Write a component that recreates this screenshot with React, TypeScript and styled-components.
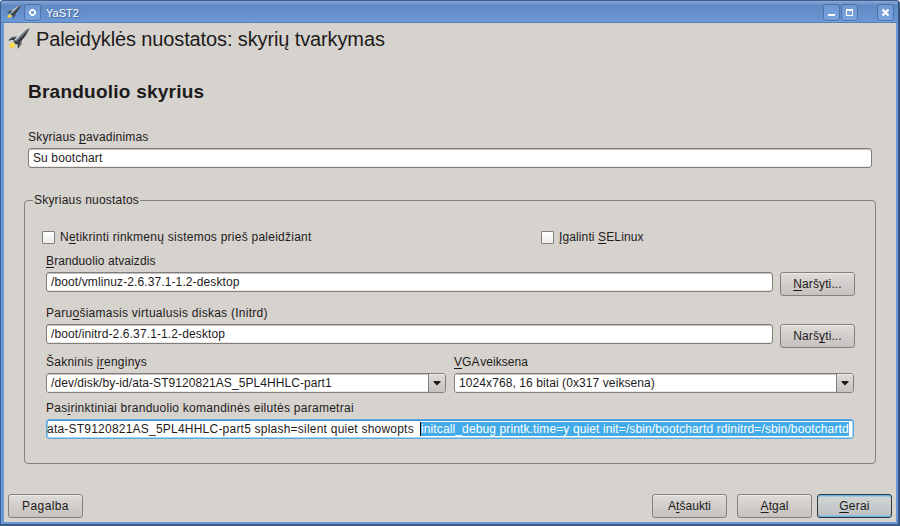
import React from "react";
import styled, { createGlobalStyle } from "styled-components";

const GlobalStyle = createGlobalStyle`
  * { box-sizing: border-box; }
  body { margin: 0; background: #ffffff; }
`;

const Window = styled.div`
  width: 900px;
  height: 526px;
  display: flex;
  flex-direction: column;
  overflow: hidden;
  border-radius: 3px 4px 0 0;
  border-style: solid;
  border-color: #3f5c8a #38557f #3b5a87 #3f5f93;
  border-width: 1px 2px 2px 1px;
  background: #6b98d6;
  color: #1d1b1a;
  font: 12px/14px "Liberation Sans", sans-serif;
`;

const TitleBar = styled.header`
  height: 22px;
  flex: none;
  display: flex;
  align-items: flex-start;
  padding: 3px 4px 0 5px;
  border-bottom: 1px solid #5580bd;
  background: linear-gradient(#86abe0 0, #7298cf 2px, #5f88c1 5px, #6b99d6 21px);
`;

const TitleText = styled.span`
  flex: 1;
  margin: 3px 0 0 5px;
  color: #ffffff;
  font-size: 11px;
  line-height: 13px;
  text-shadow: 1px 1px 1px rgba(30, 55, 100, 0.6);
`;

const TitleButton = styled.button<{ $gap?: number }>`
  width: 17px;
  height: 17px;
  flex: none;
  margin: 0 0 0 ${(p) => p.$gap ?? 0}px;
  padding: 0;
  border: 1px solid #4c70a8;
  border-radius: 3px;
  background: linear-gradient(#6f97d0, #7aa4df);
  box-shadow: 0 1px 0 rgba(160, 190, 235, 0.35);
  svg { display: block; }
`;

const Body = styled.main`
  height: 499px;
  flex: none;
  margin: 0 2px 0 3px;
  background: #d6d2ce;
  display: flex;
  flex-direction: column;
`;

const Heading = styled.div`
  display: flex;
  height: 24px;
  margin: 4px 0 0 3px;
  font-size: 20px;
  line-height: 24px;
  svg { margin: 0 5px 0 0; }
`;

const Section = styled.h1`
  margin: 30px 0 27px 24px;
  font-size: 19px;
  line-height: 22px;
  letter-spacing: 0.24px;
`;

const Text = styled.span<{ $spacing?: number; $word?: number }>`
  letter-spacing: ${(p) => p.$spacing ?? 0}px;
  word-spacing: ${(p) => p.$word ?? 0}px;
  white-space: pre;
  u {
    text-decoration: underline 1px;
    text-underline-offset: 2px;
    text-decoration-skip-ink: none;
  }
`;

const Label = styled.label<{ $top?: number }>`
  display: block;
  height: 14px;
  margin: ${(p) => p.$top ?? 0}px 0 4px;
`;

const NameField = styled.div`
  margin: 0 24px;
`;

const Field = styled.div<{ $focused?: boolean }>`
  flex: 1;
  height: 20px;
  display: flex;
  padding: 2px 0 0 4px;
  overflow: hidden;
  border: 1px solid #817d7a;
  border-radius: 3px;
  background: #ffffff;
  box-shadow: inset 0 1px 0 #c4c1bf, inset 0 -1px 0 #ebe9e8;
  ${(p) =>
    p.$focused &&
    `
    padding-left: 0;
    border-color: #5aa9dc;
    box-shadow: inset 0 1px 0 #3f95d0, inset 1px 0 0 #8cc6ea, inset 0 -1px 0 #a9d7f2, inset -1px 0 0 #a9d7f2;
  `}
`;

const Caret = styled.i`
  width: 1px;
  height: 14px;
  background: #000000;
  flex: none;
`;

const Selection = styled.span`
  width: 428px;
  height: 14px;
  flex: none;
  color: #ffffff;
  background: #43ace8;
`;

const BeforeSelection = styled.span`
  width: 373px;
  flex: none;
`;

const Group = styled.section`
  position: relative;
  height: 264px;
  margin: 32px 20px 0;
  padding: 29px 21px 0;
  border: 1px solid #84807d;
  border-radius: 4px;
`;

const Legend = styled.span`
  position: absolute;
  top: -8px;
  left: 8px;
  width: 107px;
  padding-left: 1px;
  background: #d6d2ce;
`;

const CheckRow = styled.div`
  display: grid;
  grid-template-columns: 499px 1fr;
  height: 14px;
  margin-left: -4px;
`;

const Check = styled.div`
  display: flex;
  gap: 5px;
`;

const CheckBox = styled.i`
  width: 13px;
  height: 13px;
  margin-top: 1px;
  flex: none;
  border: 1px solid #84807d;
  border-radius: 1px;
  background: linear-gradient(#ffffff, #eeecea);
`;

const Row = styled.div`
  display: flex;
  gap: 7px;
  height: 24px;
  margin-right: -1px;
`;

const Button = styled.button<{ $primary?: boolean }>`
  width: 75px;
  height: 24px;
  flex: none;
  padding: 4px 0 0;
  display: flex;
  justify-content: center;
  border: 1px solid #84807d;
  border-radius: 3px;
  background: linear-gradient(#dedbd9, #c5c1be);
  box-shadow: inset 0 1px 0 #efedec;
  color: #1d1b1a;
  font: 12px/14px "Liberation Sans", sans-serif;
  ${(p) =>
    p.$primary &&
    `
    border-color: #33373a;
    background: linear-gradient(#d3d5d6, #bcc0c2);
    box-shadow: inset 0 1px 0 #5fb5e6, inset 0 2px 0 #9fcbe2, inset 0 -1px 0 #5fb5e6, inset 0 -2px 0 #9fc2d5;
  `}
`;

const Combos = styled.div`
  display: grid;
  grid-template-columns: 400px 400px;
  gap: 8px;
`;

const Combo = styled.div`
  display: flex;
  height: 20px;
  overflow: hidden;
  border: 1px solid #817d7a;
  border-radius: 3px;
  background: #ffffff;
`;

const ComboValue = styled.div`
  flex: 1;
  padding: 2px 0 0 4px;
  box-shadow: inset 0 1px 0 #c4c1bf, inset 0 -1px 0 #ebe9e8;
`;

const ComboArrow = styled.div`
  width: 17px;
  border-left: 1px solid #817d7a;
  background: linear-gradient(#dedbd9, #c5c1be);
  box-shadow: inset 0 1px 0 #efedec;
  svg { display: block; margin: 7px 0 0 4px; }
`;

const Footer = styled.footer`
  display: flex;
  margin: 30px 4px 0;
`;

const Spacer = styled.div<{ $w?: number }>`
  flex: ${(p) => (p.$w ? `0 0 ${p.$w}px` : "1")};
`;

const Rocket = ({ size, id }: { size: number; id: string }) => (
  <svg width={size} height={size} viewBox="0 0 24 24">
    <defs>
      <linearGradient id={id} x1="10" y1="7" x2="15" y2="12" gradientUnits="userSpaceOnUse">
        <stop offset="0" stopColor="#8b949c" />
        <stop offset="0.3" stopColor="#e9edf0" />
        <stop offset="0.55" stopColor="#7d868f" />
        <stop offset="0.9" stopColor="#2a2f35" />
      </linearGradient>
    </defs>
    <path d="M6 15.5 L8.5 17.8 L6 21 L5.2 20 L2.5 21.5 L3.4 18.6 L1.3 18.8 Z" fill="#ffd51e" />
    <path d="M6 16 L7.6 17.5 L4.8 19.4 Z" fill="#fff17a" />
    <path d="M10.5 9.5 L5 10 L1.2 13.6 L7.5 12.8 Z" fill="#30353b" />
    <path d="M9.5 9.8 L5.2 10.4 L3.4 12.2" stroke="#8b949c" strokeWidth="0.8" fill="none" />
    <path d="M14.5 13.5 L14.3 17.6 L10.8 21.8 L10.6 16.6 Z" fill="#30353b" />
    <path d="M13.8 15 L13.5 17.4 L11.8 19.4" stroke="#a2aab1" strokeWidth="0.8" fill="none" />
    <path d="M22.8 1 C18 3 13.5 5.5 10 9.5 L6.3 15 L9 17.4 L14.6 13.5 C18 10 20.5 6 22.8 1 Z" fill={`url(#${id})`} />
    <path d="M6.8 13.5 L10.5 16.7" stroke="#30353b" strokeWidth="1.2" />
  </svg>
);

const Arrow = () => (
  <svg width="9" height="6" viewBox="0 0 9 6">
    <path d="M0.5 0 H7.5 V1 L4 4.5 L0.5 1 Z" fill="#1d1b1a" />
  </svg>
);

export default function App() {
  return (
    <>
      <GlobalStyle />
      <Window>
        <TitleBar>
          <Rocket size={16} id="hullSmall" />
          <TitleButton $gap={2}>
            <svg width="15" height="15" viewBox="0 0 15 15" shapeRendering="crispEdges">
              <path d="M6 4h3v1h1v1h1v3h-1v1h-1v1h-3v-1h-1v-1h-1v-3h1v-1h1z M6 6v3h3v-3z" fill="#fff" fillRule="evenodd" />
            </svg>
          </TitleButton>
          <TitleText>YaST2</TitleText>
          <TitleButton>
            <svg width="15" height="15" viewBox="0 0 15 15" shapeRendering="crispEdges">
              <path d="M4 9h7v2H4z" fill="#fff" />
            </svg>
          </TitleButton>
          <TitleButton $gap={1}>
            <svg width="15" height="15" viewBox="0 0 15 15" shapeRendering="crispEdges">
              <path d="M4 4h7v7H4z M5 6v4h5V6z" fill="#fff" fillRule="evenodd" />
            </svg>
          </TitleButton>
          <TitleButton $gap={19}>
            <svg width="15" height="15" viewBox="0 0 15 15">
              <path d="M4.5 4.5l6 6M10.5 4.5l-6 6" stroke="#fff" strokeWidth="2.3" />
            </svg>
          </TitleButton>
        </TitleBar>
        <Body>
          <Heading>
            <Rocket size={24} id="hullLarge" />
            <Text $spacing={-0.12}>Paleidyklės nuostatos: skyrių tvarkymas</Text>
          </Heading>
          <Section>Branduolio skyrius</Section>
          <NameField>
            <Label><Text $spacing={0.19}>Skyriaus <u>p</u>avadinimas</Text></Label>
            <Field><Text $spacing={0.11}>Su bootchart</Text></Field>
          </NameField>
          <Group>
            <Legend><Text $spacing={0.2}>Skyriaus nuostatos</Text></Legend>
            <CheckRow>
              <Check>
                <CheckBox />
                <Text $spacing={0.25}>N<u>e</u>tikrinti rinkmenų sistemos prieš paleidžiant</Text>
              </Check>
              <Check>
                <CheckBox />
                <Text $spacing={0.12}>Įgalinti <u>S</u>ELinux</Text>
              </Check>
            </CheckRow>
            <Label $top={10}><Text $spacing={0.11}><u>B</u>randuolio atvaizdis</Text></Label>
            <Row>
              <Field><Text $spacing={0.11}>/boot/vmlinuz-2.6.37.1-1.2-desktop</Text></Field>
              <Button><Text $spacing={0.12}><u>N</u>aršyti...</Text></Button>
            </Row>
            <Label $top={10}><Text $spacing={0.27}>Paru<u>o</u>šiamasis virtualusis diskas (Initrd)</Text></Label>
            <Row>
              <Field><Text $spacing={0.12}>/boot/initrd-2.6.37.1-1.2-desktop</Text></Field>
              <Button><Text $spacing={0.12}>Narš<u>y</u>ti...</Text></Button>
            </Row>
            <Combos>
              <div>
                <Label $top={7}><Text $spacing={0.24}>Šakninis į<u>r</u>enginys</Text></Label>
                <Combo>
                  <ComboValue><Text $spacing={0.07}>/dev/disk/by-id/ata-ST9120821AS_5PL4HHLC-part1</Text></ComboValue>
                  <ComboArrow><Arrow /></ComboArrow>
                </Combo>
              </div>
              <div>
                <Label $top={7}><Text $spacing={0.05} $word={-2}><u>V</u>GA veiksena</Text></Label>
                <Combo>
                  <ComboValue><Text $spacing={0.09}>1024x768, 16 bitai (0x317 veiksena)</Text></ComboValue>
                  <ComboArrow><Arrow /></ComboArrow>
                </Combo>
              </div>
            </Combos>
            <Label $top={8}><Text $spacing={0.26}>Pas<u>i</u>rinktiniai branduolio komandinės eilutės parametrai</Text></Label>
            <Field $focused>
              <BeforeSelection>
                <Text $spacing={0.22}>{"ata-ST9120821AS_5PL4HHLC-part5 splash=silent quiet showopts  "}</Text>
              </BeforeSelection>
              <Caret />
              <Selection><Text $spacing={0.12}>initcall_debug printk.time=y quiet init=/sbin/bootchartd rdinitrd=/sbin/bootchartd</Text></Selection>
            </Field>
          </Group>
          <Footer>
            <Button><Text $spacing={0.4}>Pagalba</Text></Button>
            <Spacer />
            <Button><Text $spacing={0.05}>A<u>t</u>šaukti</Text></Button>
            <Spacer $w={10} />
            <Button><Text $spacing={0.1}><u>A</u>tgal</Text></Button>
            <Spacer $w={5} />
            <Button $primary><Text $spacing={0.2}><u>G</u>erai</Text></Button>
          </Footer>
        </Body>
      </Window>
    </>
  );
}
